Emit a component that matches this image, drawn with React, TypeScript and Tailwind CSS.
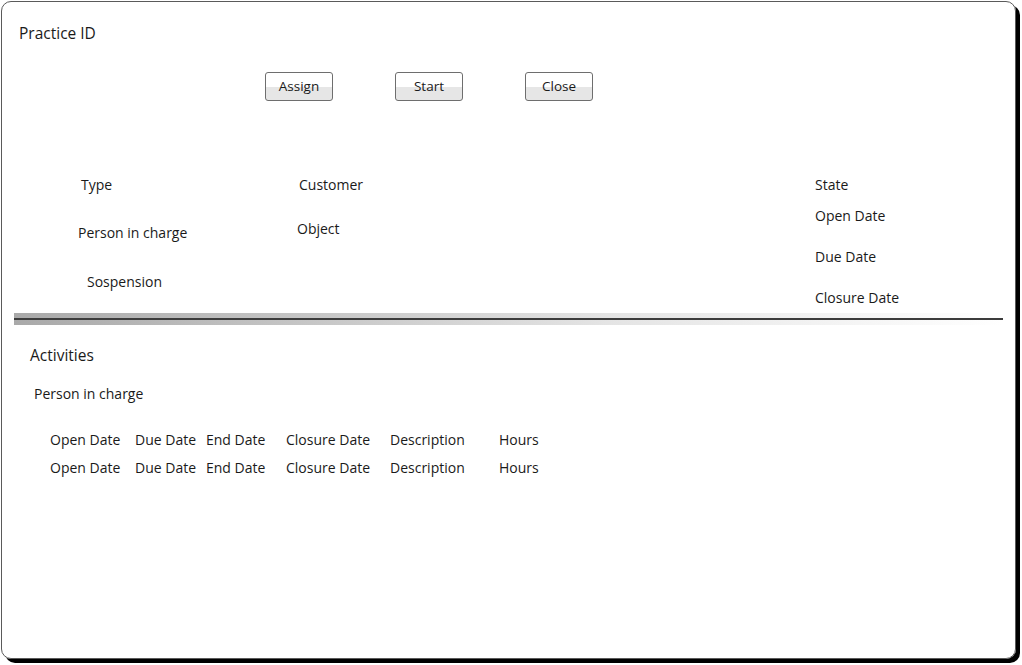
import React from 'react';

const font = { fontFamily: '"Open Sans", "Noto Sans", sans-serif' };

const Btn = ({ label }: { label: string }) => (
  <button className="w-[68px] h-[29px] pb-[2px] border border-[#6e6e6e] rounded-[3px] bg-[linear-gradient(to_bottom,#ffffff_52%,#e6e6e6_52%)] text-[13.5px] leading-[18px] text-[#1a1a1a]">
    {label}
  </button>
);

const cols = ['Open Date', 'Due Date', 'End Date', 'Closure Date', 'Description', 'Hours'];
const widths = ['w-[85px]', 'w-[71px]', 'w-[80px]', 'w-[104px]', 'w-[109px]', 'w-[60px]'];

export default function App() {
  return (
    <div className="w-[1022px] h-[665px] bg-white pl-[1px] pt-[1px] pr-[6px] pb-[6px]" style={font}>
      <div className="h-full border border-[#5a5a5a] rounded-[10px] shadow-[4px_4px_0_#000] text-[#1a1a1a] text-[14px] leading-[18px]">
        {/* Header */}
        <div className="pt-[21px] pl-[17px] text-[15.5px] leading-[20px]">Practice ID</div>

        <div className="flex gap-[62px] ml-[263px] mt-[29px]">
          <Btn label="Assign" />
          <Btn label="Start" />
          <Btn label="Close" />
        </div>

        {/* Practice info */}
        <div className="flex mt-[75px]">
          <div className="w-[295px] flex flex-col">
            <span className="ml-[79px]">Type</span>
            <span className="ml-[76px] mt-[30px]">Person in charge</span>
            <span className="ml-[85px] mt-[31px]">Sospension</span>
          </div>
          <div className="w-[518px] flex flex-col">
            <span className="ml-[2px]">Customer</span>
            <span className="mt-[26px]">Object</span>
          </div>
          <div className="flex flex-col">
            <span>State</span>
            <span className="mt-[13px]">Open Date</span>
            <span className="mt-[23px]">Due Date</span>
            <span className="mt-[23px]">Closure Date</span>
          </div>
        </div>

        {/* Divider */}
        <div className="ml-[12px] w-[989px] h-[12px] mt-[6px] pt-[5px] bg-gradient-to-r from-[#a9a9a9] via-[#e4e4e4] via-60% to-white">
          <div className="h-[2px] bg-[#3c3c3c]" />
        </div>

        {/* Activities */}
        <div className="ml-[28px] mt-[20px] text-[15.5px] leading-[20px]">Activities</div>
        <div className="ml-[32px] mt-[20px]">Person in charge</div>

        <div className="ml-[48px] mt-[28px] flex flex-col gap-[10px]">
          {[0, 1].map((r) => (
            <div key={r} className="flex">
              {cols.map((c, i) => (
                <span key={c} className={widths[i]}>
                  {c}
                </span>
              ))}
            </div>
          ))}
        </div>
      </div>
    </div>
  );
}
